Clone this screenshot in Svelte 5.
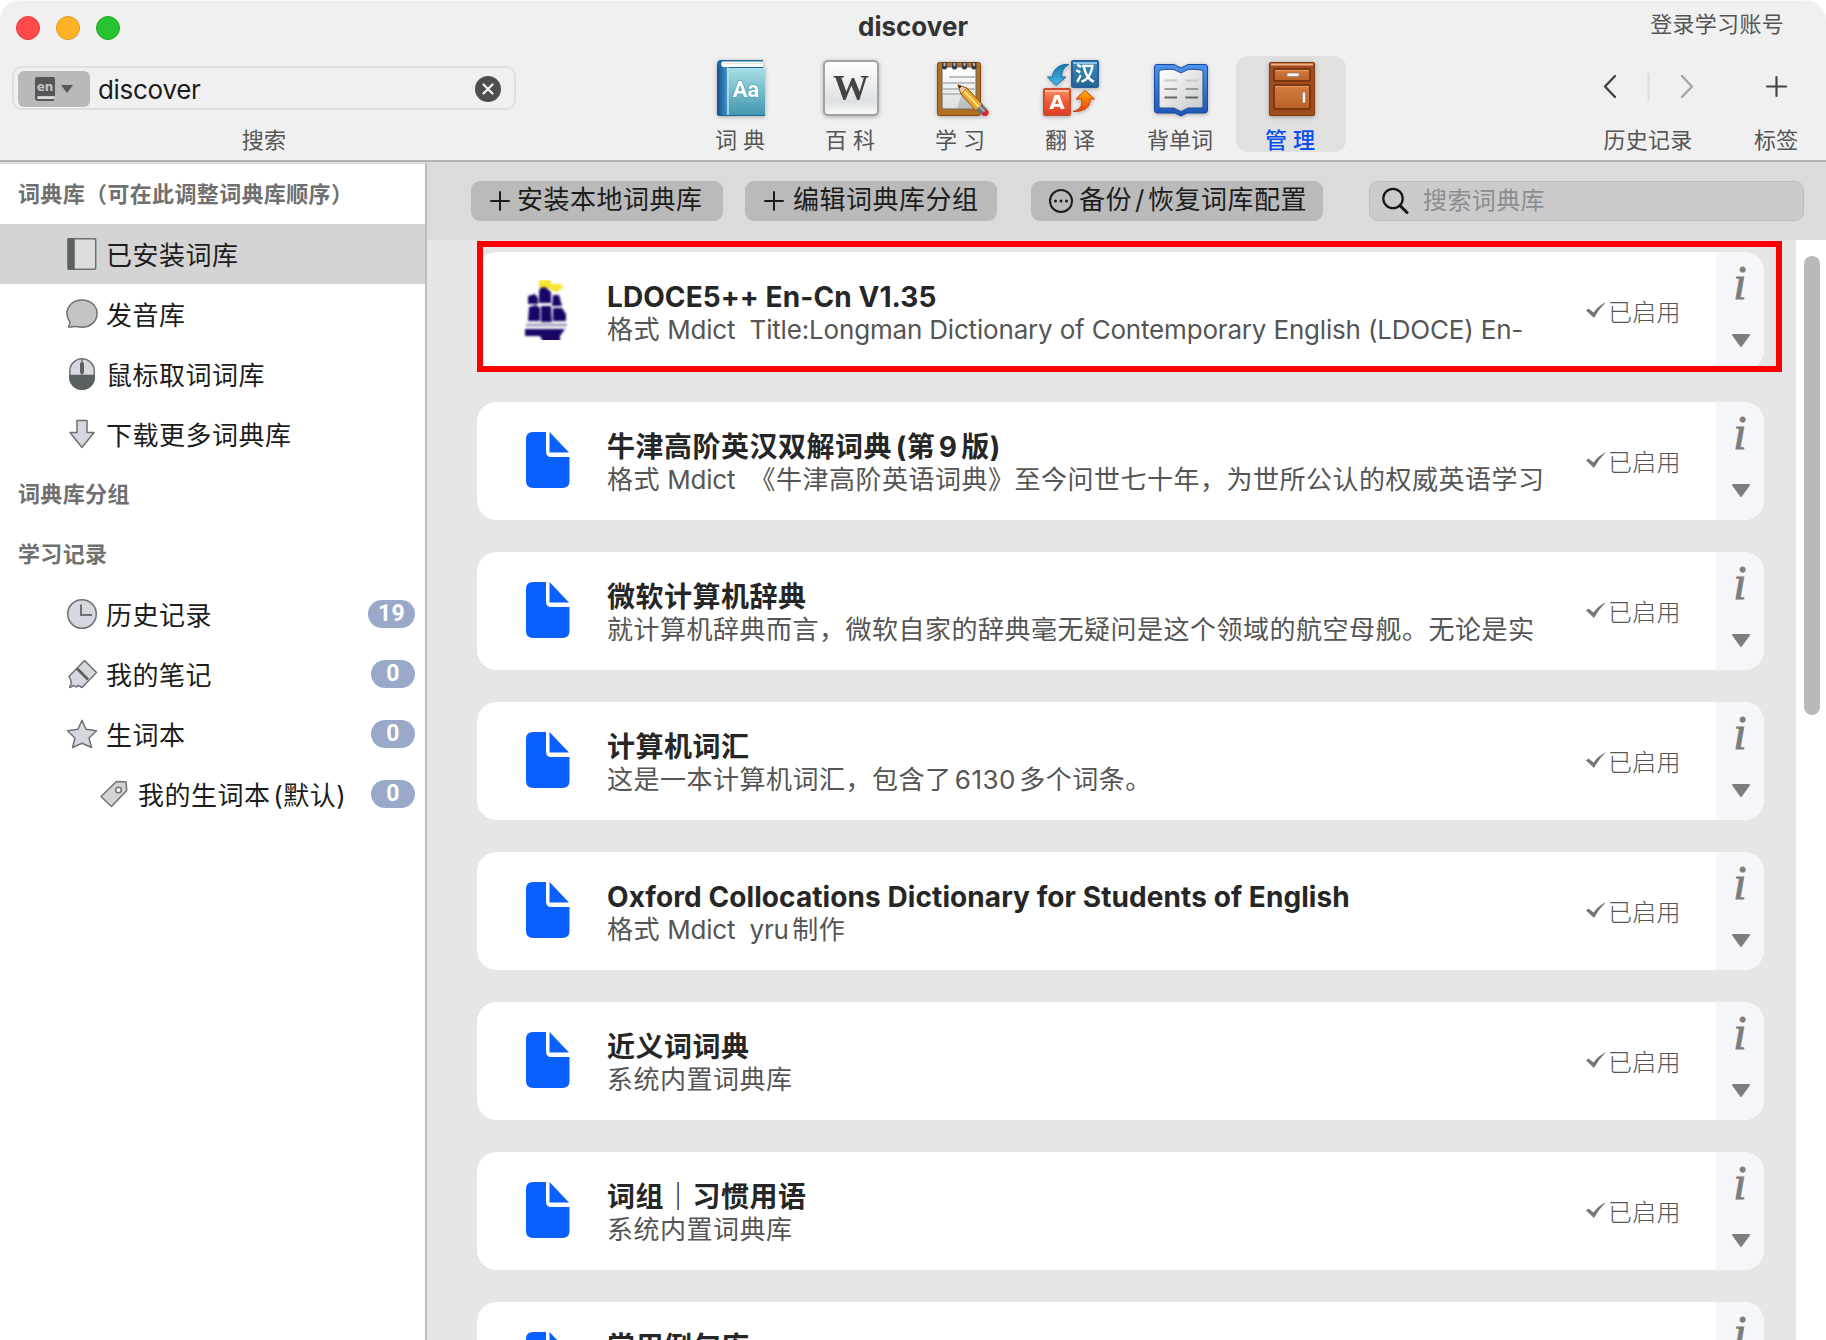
<script>
  const tabs = [
    { id: 'dict', label: '词 典' },
    { id: 'wiki', label: '百 科' },
    { id: 'study', label: '学 习' },
    { id: 'translate', label: '翻 译' },
    { id: 'words', label: '背单词' },
    { id: 'manage', label: '管 理', active: true }
  ];

  const sidebar = [
    { heading: true, label: '词典库（可在此调整词典库顺序）' },
    { icon: 'book', label: '已安装词库', selected: true },
    { icon: 'bubble', label: '发音库' },
    { icon: 'mouse', label: '鼠标取词词库' },
    { icon: 'down', label: '下载更多词典库' },
    { heading: true, label: '词典库分组' },
    { heading: true, label: '学习记录' },
    { icon: 'clock', label: '历史记录', badge: '19' },
    { icon: 'marker', label: '我的笔记', badge: '0' },
    { icon: 'star', label: '生词本', badge: '0' },
    { icon: 'tag', label: '我的生词本 (默认)', badge: '0', nested: true }
  ];

  const dictionaries = [
    { title: 'LDOCE5++ En-Cn V1.35', lead: '格式', latin: ' Mdict  Title:Longman Dictionary of Contemporary English (LDOCE) En-', ship: true, latinTitle: true },
    { title: '牛津高阶英汉双解词典 (第 9 版)', lead: '格式', latin: ' Mdict  ', tail: '《牛津高阶英语词典》至今问世七十年，为世所公认的权威英语学习' },
    { title: '微软计算机辞典', lead: '就计算机辞典而言，微软自家的辞典毫无疑问是这个领域的航空母舰。无论是实' },
    { title: '计算机词汇', lead: '这是一本计算机词汇，包含了 6130 多个词条。' },
    { title: 'Oxford Collocations Dictionary for Students of English', lead: '格式', latin: ' Mdict  yru', tail: ' 制作', latinTitle: true },
    { title: '近义词词典', lead: '系统内置词典库' },
    { title: '词组｜习惯用语', lead: '系统内置词典库' },
    { title: '常用例句库', lead: '系统内置词典库' }
  ];
</script>

{#snippet tabIcon(id)}
  <svg class="tab-icon" width="56" height="60" viewBox="0 0 56 60">
    {#if id === 'dict'}
      <defs>
        <linearGradient id="dictCover" x1="0" y1="0" x2="0" y2="1"><stop offset="0" stop-color="#a9dfe6" /><stop offset="1" stop-color="#4397ae" /></linearGradient>
        <linearGradient id="dictSpine" x1="0" y1="0" x2="1" y2="0"><stop offset="0" stop-color="#174f86" /><stop offset=".65" stop-color="#3183bd" /><stop offset="1" stop-color="#5ba9cf" /></linearGradient>
      </defs>
      <path d="M8 0H50V9H52V56H6Q4 56 4 53V5Q4 0 8 0Z" fill="#1d6696" />
      <path d="M9 1.500H50V7H10Q7 6 9 1.500Z" fill="#fff" />
      <path d="M10 3.500H50" stroke="#d5e5ea" stroke-width="1" />
      <rect x="4" y="7" width="12" height="48" fill="url(#dictSpine)" />
      <rect x="14" y="8" width="38" height="47" fill="url(#dictCover)" />
      <path d="M15 8V55" stroke="#bfe4ee" stroke-width="2" opacity=".7" />
      <text x="33" y="36.500" text-anchor="middle" class="aa">Aa</text>
    {:else if id === 'wiki'}
      <defs><linearGradient id="wikiBg" x1="0" y1="0" x2="0" y2="1"><stop offset="0" stop-color="#fff" /><stop offset=".75" stop-color="#dde1e3" /><stop offset="1" stop-color="#fbfbfb" /></linearGradient></defs>
      <rect x="1" y="1" width="54" height="54" rx="4" fill="url(#wikiBg)" stroke="#a2a2a2" stroke-width="2" />
      <text x="28" y="40" text-anchor="middle" class="w" textLength="36" lengthAdjust="spacingAndGlyphs">W</text>
    {:else if id === 'study'}
      <defs><linearGradient id="padBg" x1="0" y1="0" x2="0" y2="1"><stop offset="0" stop-color="#fff" /><stop offset="1" stop-color="#d9dedf" /></linearGradient></defs>
      <rect x="4.500" y="2.500" width="43" height="53" rx="2" fill="#b07222" stroke="#7d4a10" />
      <rect x="9" y="7" width="34" height="42" fill="url(#padBg)" stroke="#6b6258" />
      <path d="M16 17H42M10 23H42M10 29H42M10 34H30" stroke="#bcbfc0" stroke-width="2" />
      {#each [11.5, 21.5, 31.5, 41] as x}
        <rect x={x - 2.500} y="2" width="5" height="7.500" rx="2" fill="#3a3a45" />
        <rect x={x - 1} y="3" width="2" height="3" fill="#b6b6c2" />
      {/each}
      <path d="M24 49L43 49V40L30 30Z" fill="#8f9494" opacity=".4" />
      <path d="M25 25L34 28L50 45L43 51L28 34Z" fill="#eba52e" stroke="#8c5314" />
      <path d="M31 31L47 48" stroke="#ffdc75" stroke-width="2.500" />
      <path d="M25 25L34 28L28 34Z" fill="#f0c7a0" stroke="#8c5314" stroke-width=".7" />
      <path d="M25 25L28.500 26.500L26.500 28.500Z" fill="#222" />
      <circle cx="52" cy="52.500" r="3.600" fill="#e81f35" />
      <path d="M49 44L54 49L48 55L43 50Z" fill="#707070" />
      <path d="M46.500 46.500L51.500 51.500" stroke="#c4c4c4" stroke-width="1.300" />
    {:else if id === 'translate'}
      <defs>
        <linearGradient id="hanBg" x1="0" y1="0" x2="0" y2="1"><stop offset="0" stop-color="#408cc0" /><stop offset="1" stop-color="#216590" /></linearGradient>
        <linearGradient id="aBg" x1="0" y1="0" x2="0" y2="1"><stop offset="0" stop-color="#fb9166" /><stop offset=".5" stop-color="#ee5a36" /><stop offset="1" stop-color="#dd3f20" /></linearGradient>
        <linearGradient id="upBg" x1="0" y1="0" x2="0" y2="1"><stop offset="0" stop-color="#ffb000" /><stop offset="1" stop-color="#ec3c08" /></linearGradient>
        <linearGradient id="downBg" x1="0" y1="0" x2="0" y2="1"><stop offset="0" stop-color="#1c76ad" /><stop offset="1" stop-color="#46b9e8" /></linearGradient>
      </defs>
      <rect x="29" y="1" width="26" height="26" rx="1" fill="url(#hanBg)" stroke="#2a5f9e" stroke-width="2" />
      <path d="M30 3H54" stroke="#a5d8f5" stroke-width="1.500" />
      <text x="42" y="21" text-anchor="middle" class="han">汉</text>
      <rect x="1" y="29" width="26" height="26" rx="1" fill="url(#aBg)" stroke="#cf4a28" stroke-width="2" />
      <path d="M2 31H26" stroke="#ffd0b8" stroke-width="1.500" />
      <text x="14" y="48.500" text-anchor="middle" class="letter-a">A</text>
      <path d="M26 4.500C20 3.500 10 7 9.500 17H4.500L13 25.500L23 17H18.500C18.500 11 21 7 26 4.500Z" fill="url(#downBg)" stroke="#1b6e9e" />
      <path d="M30 51.500C38 49 39.500 46 38.500 39H33L42 30.500L51.500 39H47C48 46 42 52 30 51.500Z" fill="url(#upBg)" stroke="#c9430e" />
    {:else if id === 'words'}
      <defs>
        <linearGradient id="coverBg" x1="0" y1="0" x2="0" y2="1"><stop offset="0" stop-color="#4c94ee" /><stop offset="1" stop-color="#1c55b4" /></linearGradient>
        <linearGradient id="pageBg" x1="0" y1="0" x2="1" y2="1"><stop offset="0" stop-color="#fff" /><stop offset="1" stop-color="#c5c9cb" /></linearGradient>
      </defs>
      <path d="M4 4.500H21L28 8L35 4.500H52Q54.500 4.500 54.500 7V50Q54.500 53 52 53H34L28 56L22 53H4Q1.500 53 1.500 50V7Q1.500 4.500 4 4.500Z" fill="url(#coverBg)" stroke="#1b4a9b" />
      <path d="M8 10Q19 8.500 22 10L28 13L34 10Q37 8.500 48 10Q50 10 50 12V46Q50 48 48 48H35L28 51.500L21 48H8Q6 48 6 46V12Q6 10 8 10Z" fill="url(#pageBg)" stroke="#2a4f8f" />
      <path d="M11.500 20.500H24M32.500 20.500H45" stroke="#c9c9c9" stroke-width="2" />
      <path d="M11.500 29H24M32.500 29H45" stroke="#9a9a9a" stroke-width="2" />
      <path d="M11.500 37.500H24M32.500 37.500H45" stroke="#666" stroke-width="2" />
    {:else}
      <defs><linearGradient id="woodBg" x1="0" y1="0" x2="0" y2="1"><stop offset="0" stop-color="#d47f40" /><stop offset="1" stop-color="#b96026" /></linearGradient></defs>
      <rect x="6.500" y="2.500" width="45" height="53" rx="1.500" fill="#a04c1f" stroke="#84380f" />
      <path d="M8 4.500H50" stroke="#f2b182" stroke-width="2" />
      <rect x="11" y="9" width="36" height="12" rx="1" fill="url(#woodBg)" stroke="#7c3712" stroke-width="2" />
      <rect x="11" y="25" width="36" height="24" rx="1" fill="url(#woodBg)" stroke="#7c3712" stroke-width="2" />
      <path d="M12 26.500H46M12 10.500H46" stroke="#e89c62" />
      <rect x="24" y="13" width="12" height="3.500" rx="1" fill="#f2f2f2" stroke="#8a7a6c" stroke-width=".6" />
      <rect x="39.500" y="32" width="3" height="11" rx="1" fill="#f2f2f2" stroke="#8a7a6c" stroke-width=".6" />
    {/if}
  </svg>
{/snippet}

{#snippet sideIcon(id)}
  <svg class="side-icon" width="32" height="32" viewBox="0 0 32 32" fill="#d5d9df" stroke="#6d7173" stroke-width="1.500" stroke-linejoin="round">
    {#if id === 'book'}
      <rect x="2.200" y=".7" width="27.500" height="30.500" rx="1" fill="#dcdcdc" />
      <path d="M2.200 1H8V31H2.200Z" fill="#5b6163" stroke="#5b6163" />
    {:else if id === 'bubble'}
      <path d="M16 2C24.500 2 31 7.500 31 15.500S24.500 29.300 16 29.300C13 29.300 10.500 28.300 8 28.500Q5 29.300 2.500 29Q2 28.300 3.500 26.500Q4.200 25.500 3.700 23.500C2 21.500 1 19 1 15.500C1 7.500 7.500 2 16 2Z" fill="#c4c4c4" />
    {:else if id === 'mouse'}
      <rect x="3.800" y=".8" width="24.500" height="30.500" rx="12.200" />
      <path d="M3.800 17.500H28.300V19A12.200 12.200 0 0 1 3.800 19Z" fill="#5b6163" stroke="#5b6163" />
      <path d="M16 1V17" fill="none" /><path d="M16 6V14" stroke="#5b6163" stroke-width="4" stroke-linecap="round" />
    {:else if id === 'down'}
      <path d="M11 2.500H21V14.500H28L16 29.500L4 14.500H11Z" />
    {:else if id === 'clock'}
      <circle cx="16" cy="16" r="14.300" /><path d="M15 6.500V17H26" fill="none" stroke-width="2" stroke-linejoin="miter" />
    {:else if id === 'marker'}
      <path d="M18.500 2.500L30.500 14.500L16 29.500L12.500 27.500L10 29L8 27.500L3.500 29.500L5.500 25L4.500 21.500L3 18.500Z" />
      <path d="M11 10.500L22 21.500" stroke="#5b6163" stroke-width="2.800" />
    {:else if id === 'star'}
      <path d="M16 2.200L20 11.300L30.500 12.800L23 20L25.500 29.500L16 25.300L6.500 29.500L9 20L1.500 12.800L12 11.300Z" />
    {:else}
      <path d="M18.500 3.500L28 4L28.700 12.500L13.500 28.500L3 18.500Z" fill="#d4d4d4" /><circle cx="20.500" cy="12" r="2.800" fill="#fff" />
    {/if}
  </svg>
{/snippet}

<div class="window">
  <header>
    <div class="titlebar">
      <div class="lights"><i class="red"></i><i class="yellow"></i><i class="green"></i></div>
      <h1>discover</h1>
      <span class="login">登录学习账号</span>
    </div>
    <div class="toolbar">
      <div class="search-group">
        <div class="search-field">
          <div class="lang">
            <svg width="20" height="24" viewBox="0 0 20 24"><path d="M2 0H18Q20 0 20 2V19H2.500V21.500H19V24H3Q0 24 0 21V2Q0 0 2 0Z" fill="#55565a" /><path d="M2.500 19.500H19V22H2.500Z" fill="#dadada" /><text x="10" y="14" text-anchor="middle" class="en">en</text></svg>
            <svg width="12" height="8" viewBox="0 0 12 8"><path d="M0 0H12L6 8Z" fill="#55565a" /></svg>
          </div>
          <span class="query">discover</span>
          <svg class="clear" width="26" height="26" viewBox="0 0 26 26"><circle cx="13" cy="13" r="13" fill="#4e4e4e" /><path d="M8.500 8.500L17.500 17.500M17.500 8.500L8.500 17.500" stroke="#f4f4f4" stroke-width="2.300" stroke-linecap="round" /></svg>
        </div>
        <span class="caption">搜索</span>
      </div>
      <nav>
        {#each tabs as tab}
          <div class="tab" class:active={tab.active}>
            {@render tabIcon(tab.id)}
            <span>{tab.label}</span>
          </div>
        {/each}
      </nav>
      <div class="history">
        <svg width="90" height="30" viewBox="0 0 90 30" fill="none" stroke-width="2.400" stroke-linecap="round" stroke-linejoin="round"><path d="M12 4L2 14.500L12 25" stroke="#404040" /><path d="M45.500 1V29" stroke="#dcdcdc" stroke-width="2" stroke-linecap="butt" /><path d="M79 4L89 14.500L79 25" stroke="#a5a5a5" /></svg>
        <span class="caption">历史记录</span>
      </div>
      <div class="add-tab">
        <svg width="24" height="30" viewBox="0 0 24 30" fill="none" stroke="#454545" stroke-width="2.200" stroke-linecap="round"><path d="M12.500 5V24M3 14.500H22" /></svg>
        <span class="caption">标签</span>
      </div>
    </div>
  </header>

  <div class="body">
    <aside>
      {#each sidebar as item}
        {#if item.heading}
          <h2>{item.label}</h2>
        {:else}
          <div class="side-row" class:selected={item.selected} class:nested={item.nested}>
            {@render sideIcon(item.icon)}
            <span class="side-label">{item.label}</span>
            {#if item.badge}<span class="badge">{item.badge}</span>{/if}
          </div>
        {/if}
      {/each}
    </aside>

    <main>
      <div class="actions">
        <button class="install"><svg width="20" height="20" viewBox="0 0 20 20"><path d="M10 1V19M1 10H19" /></svg><span>安装本地词典库</span></button>
        <button class="edit"><svg width="20" height="20" viewBox="0 0 20 20"><path d="M10 1V19M1 10H19" /></svg><span>编辑词典库分组</span></button>
        <button class="backup"><svg width="24" height="24" viewBox="0 0 24 24"><circle cx="12" cy="12" r="11" /><path d="M6.500 12H6.510M12 12H12.010M17.500 12H17.510" stroke-width="3" /></svg><span>备份<em>/</em>恢复词库配置</span></button>
        <div class="filter">
          <svg width="28" height="28" viewBox="0 0 28 28" fill="none" stroke="#161616" stroke-linecap="round"><circle cx="12" cy="11.500" r="9.700" stroke-width="2.200" /><path d="M19 18.500L26 25.500" stroke-width="3" /></svg>
          <span>搜索词典库</span>
        </div>
      </div>

      <div class="viewport">
        <div class="list">
          {#each dictionaries as d}
            <article>
              {#if d.ship}
                <svg class="ship" width="48" height="60" viewBox="0 0 48 60">
                  <g class="soft">
                    <path d="M17 0H29V4H40V9L34 12L27 9L23 8H17Z" fill="#f7e52e" />
                    <path d="M18 8L23 7L29 12V23H17V12ZM6 16L13 14L16 18V24H6ZM31 15H37L40 26H30ZM7 27L14 25L18 28V41H6ZM19 26H29L30 42H19ZM31 28H40L44 34V41H31Z" fill="#1a0567" />
                    <path d="M4 45H45" stroke="#a59fc4" stroke-width="3" fill="none" />
                    <path d="M3 49H43L38 56V62H21L18 56H3Z" fill="#1a0567" />
                  </g>
                </svg>
              {:else}
                <svg class="file" width="44" height="58" viewBox="0 0 44 58" fill="#0a60ff"><path d="M7 1H20V20Q20 26 25 26H43.500V50Q43.500 57 36.500 57H7Q0 57 0 50V8Q0 1 7 1Z" /><path d="M23.500 1L43 21.500H23.500Z" /></svg>
              {/if}
              <div class="info">
                <h3 class:latin-title={d.latinTitle}>{d.title}</h3>
                <p>{d.lead}{#if d.latin}<span class="latin">{d.latin}</span>{/if}{d.tail ?? ''}</p>
              </div>
              <div class="status">
                <svg width="20" height="17" viewBox="0 0 20 17"><path d="M0 8.500L2.500 6.500L7.500 10.500Q12 4 20 0Q13 7 8 16Q4 12 0 8.500Z" fill="#777" /></svg>
                <span>已启用</span>
              </div>
              <div class="side">
                <span class="i">i</span>
                <svg width="20" height="14" viewBox="0 0 20 14"><path d="M2 1H18L10 12Z" fill="#7d7d7d" stroke="#7d7d7d" stroke-width="2" stroke-linejoin="round" /></svg>
              </div>
            </article>
          {/each}
        </div>
        <div class="track"><div class="thumb"></div></div>
        <div class="highlight"></div>
      </div>
    </main>
  </div>
</div>

<style>
  :global(body) { background: #fff; overflow: hidden; }
  * { box-sizing: border-box; }
  .window { width: 1826px; height: 1340px; overflow: hidden; display: flex; flex-direction: column; border-radius: 20px 20px 0 0; background: #fff; font-family: Inter, 'Noto Sans CJK SC', sans-serif; color: #1c1c1c; }
  h1, h2, h3, p { margin: 0; white-space: pre; }
  svg { display: block; flex: none; }
  span { white-space: pre; }

  header { height: 162px; flex: none; background: #f0f0f0; border-top: 1px solid #fafafa; border-bottom: 2px solid #b3b3b3; }
  .titlebar { height: 55px; display: grid; grid-template-columns: 1fr auto 1fr; padding: 0 42px 0 16px; }
  .lights { display: flex; gap: 16px; padding-top: 15px; }
  .lights i { width: 24px; height: 24px; border-radius: 50%; border: 1px solid; }
  .red { background: #ff4a49; border-color: #e0393a !important; }
  .yellow { background: #ffb225; border-color: #dc9a1f !important; }
  .green { background: #29c231; border-color: #1fa627 !important; }
  h1 { font-size: 26px; line-height: 32px; padding-top: 10px; font-weight: 700; letter-spacing: 0; color: #333; padding-left: 26px; }
  .login { justify-self: end; font-size: 22px; line-height: 32px; padding-top: 7px; color: #555; letter-spacing: .3px; }

  .toolbar { display: flex; height: 104px; }
  .search-group { width: 504px; margin-left: 12px; padding-top: 10px; display: flex; flex-direction: column; align-items: center; }
  .search-field { width: 504px; height: 44px; border: 2px solid #dfdfdf; border-radius: 10px; display: flex; align-items: center; padding: 2px 13px 0 4px; }
  .lang { width: 72px; height: 36px; border-radius: 6px; background: #b9b9b9; display: flex; align-items: center; padding-left: 17px; gap: 6px; }
  .en { font: 700 12px 'DejaVu Sans', sans-serif; fill: #c4c4c4; }
  .query { font-size: 26px; margin-left: 8px; flex: 1; letter-spacing: -.3px; }
  .caption { font-size: 22px; line-height: 32px; color: #555; letter-spacing: .2px; }
  .search-group .caption { margin-top: 14px; }

  nav { display: flex; margin-left: 170px; }
  .tab { width: 110px; height: 96px; border-radius: 12px; padding-top: 4px; display: flex; flex-direction: column; align-items: center; }
  .tab.active { background: #e0e0e0; }
  .tab-icon { filter: drop-shadow(0 1px 2px rgba(0, 0, 0, .3)); }
  .tab span { font-size: 22px; line-height: 32px; margin: 4px 2px 0 0; color: #555; }
  .tab.active span { color: #0a50f0; font-weight: 500; }
  .aa { font: 700 22px Roboto, sans-serif; fill: #fff; stroke: #4fa5ba; stroke-width: 1.5px; paint-order: stroke; }
  .w { font: 700 35px 'Liberation Serif', serif; fill: #444; }
  .han { font: 700 20px 'Noto Sans CJK SC', sans-serif; fill: #fff; }
  .letter-a { font: 700 20px 'DejaVu Sans', sans-serif; fill: #fff; }
  .history { margin-left: 257px; padding-top: 16px; display: flex; flex-direction: column; align-items: center; }
  .history .caption, .add-tab .caption { margin-top: 22px; }
  .add-tab { margin-left: 61px; padding-top: 16px; display: flex; flex-direction: column; align-items: center; }

  .body { flex: 1; min-height: 0; display: flex; }
  aside { width: 427px; border-right: 2px solid #bdbdbd; border-top: 2px solid #dcdcdc; background: #fff; }
  h2 { height: 60px; line-height: 60px; padding-left: 18px; font-size: 22px; font-weight: 600; color: #707070; letter-spacing: .35px; }
  .side-row { height: 60px; padding: 0 10px 0 66px; display: flex; align-items: center; }
  .side-row.nested { padding-left: 98px; }
  .side-row.selected { background: #d4d4d4; }
  .side-label { font-size: 26px; line-height: 56px; padding-top: 4px; margin-left: 8px; flex: 1; letter-spacing: .5px; word-spacing: -5px; }
  .badge { min-width: 44px; height: 28px; border-radius: 14px; padding: 0 10px; background: #9aa9ca; color: #fff; font: 700 23px/28px Roboto, sans-serif; letter-spacing: .3px; text-align: center; }

  main { flex: 1; min-width: 0; display: flex; flex-direction: column; background: #e6e6e6; }
  .actions { height: 78px; background: #dbdbdb; display: flex; align-items: center; padding-left: 44px; }
  button { height: 40px; border: 0; border-radius: 9px; background: #bababa; color: #1c1c1c; font: 26px/36px Inter, 'Noto Sans CJK SC', sans-serif; letter-spacing: .5px; display: flex; align-items: center; padding: 0 0 0 19px; white-space: nowrap; }
  button svg { fill: none; stroke: #1c1c1c; stroke-width: 2px; stroke-linecap: round; }
  button span { padding-bottom: 3px; }
  .install { width: 252px; }
  .install span { margin-left: 7px; }
  .edit { width: 252px; margin-left: 22px; }
  .edit span { margin-left: 9px; }
  .backup { width: 292px; margin-left: 34px; padding-left: 18px; }
  .backup span { margin-left: 6px; }
  .backup em { font-style: normal; margin: 0 3px; }
  .filter { width: 435px; height: 40px; margin-left: 46px; border-radius: 9px; border: 1px solid #bdbdbd; background: #cbcbcd; display: flex; align-items: center; padding-left: 11px; }
  .filter span { margin-left: 14px; font-size: 24px; line-height: 38px; letter-spacing: .4px; color: #8d8d8f; }

  .viewport { flex: 1; min-height: 0; position: relative; display: flex; justify-content: space-between; }
  .list { margin-left: 50px; padding-top: 12px; width: 1287px; display: flex; flex-direction: column; gap: 32px; }
  article { height: 118px; flex: none; background: #fff; border-radius: 20px; overflow: hidden; display: flex; }
  .file { margin: 29px 0 0 49px; }
  .ship { margin: 28px 0 0 45px; }
  .soft { filter: blur(1.1px); }
  .info { margin-left: 37px; padding-top: 27px; width: 979px; height: 118px; overflow: hidden; }
  h3 { font-size: 28px; line-height: 34px; font-weight: 700; letter-spacing: .5px; word-spacing: -3.5px; color: #262626; padding-top: 1px; margin-bottom: -1px; }
  h3.latin-title { letter-spacing: .08px; word-spacing: 0; }
  p { font-size: 26px; line-height: 34px; color: #555; letter-spacing: .5px; word-spacing: -4.5px; }
  .latin { letter-spacing: -.18px; word-spacing: 0; }
  .status { width: 130px; display: flex; align-items: flex-start; }
  .status svg { margin-top: 50px; }
  .status span { margin: 43px 0 0 2px; font-size: 24px; line-height: 36px; font-weight: 300; letter-spacing: .3px; color: #555; }
  .side { width: 48px; background: #f5f6fa; display: flex; flex-direction: column; align-items: center; flex: none; }
  .i { font: italic 400 48px/52px 'Liberation Serif', serif; -webkit-text-stroke: .9px #7d7d7d; color: #7d7d7d; margin-top: 5px; height: 52px; }
  .side svg { margin: 25px 0 0 2px; }
  .track { width: 30px; background: #fff; padding: 16px 6px 0 8px; }
  .thumb { height: 459px; border-radius: 8px; background: #b9b9b9; }
  .highlight { position: absolute; left: 50px; top: 1px; width: 1305px; height: 131px; border: 6px solid #fa0000; }
</style>
